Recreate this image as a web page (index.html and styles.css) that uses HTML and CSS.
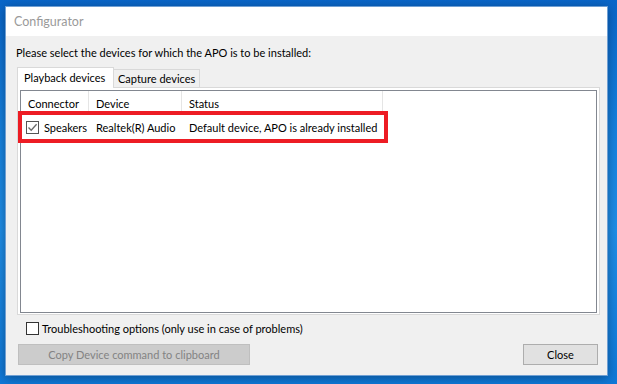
FILE: index.html
```html
<!DOCTYPE html>
<html>
<head>
<meta charset="utf-8">
<link rel="stylesheet" href="styles.css">
</head>
<body>
<div class="desktop">
  <div class="window">
    <div class="titlebar">Configurator</div>
    <div class="client">
      <div class="prompt">Please select the devices for which the APO is to be installed:</div>
      <div class="tabs">
        <div class="tab active">Playback devices</div>
        <div class="tab">Capture devices</div>
      </div>
      <div class="panel">
        <div class="listview">
          <div class="lv-header">
            <div class="hcol c1">Connector</div>
            <div class="hcol c2">Device</div>
            <div class="hcol c3">Status</div>
          </div>
          <div class="lv-row">
            <div class="cell c1"><span class="chk checked"><svg width="11" height="11" viewBox="0 0 11 11"><path d="M1.5 5.5 L4.2 8.3 L9.6 2.2" fill="none" stroke="#6a6a6a" stroke-width="1.3"/></svg></span>Speakers</div>
            <div class="cell c2">Realtek(R) Audio</div>
            <div class="cell c3">Default device, APO is already installed</div>
          </div>
          <div class="highlight"></div>
        </div>
      </div>
      <div class="options"><span class="chk"></span>Troubleshooting options (only use in case of problems)</div>
      <div class="buttons">
        <div class="btn disabled">Copy Device command to clipboard</div>
        <div class="btn close">Close</div>
      </div>
    </div>
  </div>
</div>
</body>
</html>
```
FILE: styles.css
```css
* { box-sizing: border-box; }
html, body { margin: 0; padding: 0; }
body {
  width: 617px;
  height: 384px;
  overflow: hidden;
  font-family: Lato, "Liberation Sans", sans-serif;
  font-size: 11px;
  color: #000;
}
.desktop {
  width: 617px;
  height: 384px;
  padding: 6px 0 0 5px;
  background: linear-gradient(180deg, #0a66c9 0%, #1682e0 35%, #1f8ee8 60%, #0f78d8 100%);
}
.window {
  width: 603px;
  height: 370px;
  border: 1px solid #6f9fd3;
  background: #f0f0f0;
  display: flex;
  flex-direction: column;
  box-shadow: 0 2px 10px rgba(0, 0, 0, 0.35);
}
.titlebar {
  height: 29px;
  background: #fff;
  color: #9a9a9a;
  font-size: 12.5px;
  line-height: 29px;
  padding-left: 8px;
  flex: none;
}
.client {
  flex: 1;
  display: flex;
  flex-direction: column;
  padding: 0 8px 0 0;
}
.prompt {
  margin: 9px 0 0 10px;
  line-height: 15px;
  height: 15px;
  white-space: nowrap;
}
.tabs {
  display: flex;
  align-items: flex-end;
  margin: 7px 0 0 11px;
  height: 20px;
  position: relative;
  z-index: 1;
}
.tab {
  height: 18px;
  line-height: 17px;
  border: 1px solid #d9d9d9;
  border-bottom: none;
  background: #f0f0f0;
  padding: 0 4px;
  width: 87px;
  margin-left: -1px;
  white-space: nowrap;
  overflow: hidden;
}
.tab.active {
  height: 21px;
  margin-left: 0;
  margin-bottom: -1px;
  width: 97px;
  background: #fff;
  line-height: 19px;
  padding: 0 6px;
  border-bottom: none;
}
.panel {
  margin-left: 11px;
  width: 583px;
  height: 228px;
  border: 1px solid #d9d9d9;
  background: #fff;
  padding: 2px 2px 1px 2px;
}
.listview {
  position: relative;
  width: 577px;
  height: 223px;
  border: 1px solid #828790;
  background: #fff;
}
.lv-header {
  display: flex;
  height: 24px;
}
.hcol {
  height: 24px;
  padding: 5px 0 0 7px;
  line-height: 15px;
  border-right: 1px solid #e5e5e5;
  white-space: nowrap;
  overflow: hidden;
}
.c1 { width: 68px; flex: none; }
.c2 { width: 93px; flex: none; }
.c3 { width: 201px; flex: none; }
.lv-row {
  display: flex;
  margin-top: 4px;
  height: 17px;
  line-height: 17px;
}
.cell {
  padding-left: 7px;
  white-space: nowrap;
  display: flex;
  align-items: center;
  overflow: hidden;
}
.lv-row .c1 { padding-left: 5px; }
.chk {
  display: inline-flex;
  align-items: center;
  justify-content: center;
  width: 13px;
  height: 13px;
  border: 1px solid #333;
  background: #fff;
  flex: none;
}
.chk.checked {
  border-color: #555;
  margin-right: 5px;
}
.highlight {
  position: absolute;
  left: -3px;
  top: 20px;
  width: 370px;
  height: 32px;
  border: 4px solid #ed1c24;
}
.options {
  display: flex;
  align-items: center;
  margin: 6px 0 0 20px;
  height: 15px;
  line-height: 15px;
  white-space: nowrap;
}
.options .chk { margin-right: 3px; }
.buttons {
  display: flex;
  justify-content: space-between;
  margin: 8px 0 0 12px;
  padding-right: 1px;
}
.btn {
  height: 21px;
  line-height: 19px;
  text-align: center;
  border: 1px solid #adadad;
  background: #e1e1e1;
  white-space: nowrap;
}
.btn.disabled {
  width: 232px;
  background: #cccccc;
  border-color: #bfbfbf;
  color: #838383;
}
.btn.close { width: 75px; }
```
